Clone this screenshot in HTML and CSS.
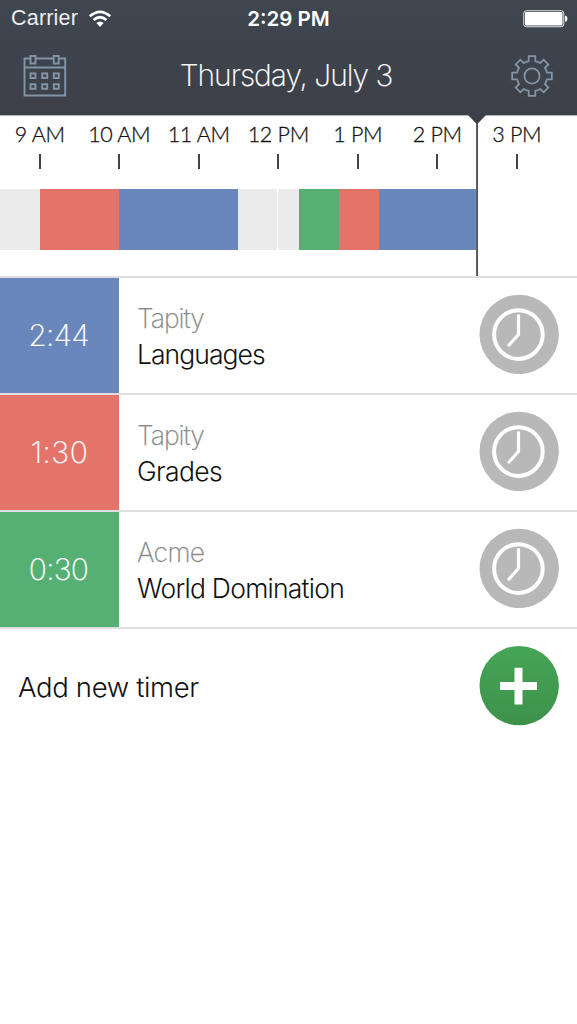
FILE: index.html
```html
<!DOCTYPE html>
<html lang="en">
<head>
<meta charset="utf-8">
<title>Timers</title>
<link rel="stylesheet" href="styles.css">
</head>
<body>
<svg width="0" height="0" class="defs">
  <symbol id="clock" viewBox="0 0 80 80">
    <circle cx="40.2" cy="40.4" r="39.7" fill="#b8b8b8"/>
    <circle cx="39.4" cy="40.6" r="24.3" fill="none" stroke="#fff" stroke-width="4"/>
    <path d="M39.5 21.5V40.5L30 51" fill="none" stroke="#fff" stroke-width="3.2" stroke-linecap="round" stroke-linejoin="round"/>
  </symbol>
</svg>
<header class="header">
  <div class="status">
    <div class="carrier"><span class="carrier-name">Carrier</span>
      <svg class="wifi" width="24" height="18" viewBox="0 0 24 18">
        <path d="M1.8 6.2Q12 -2.4 22.2 6.2" fill="none" stroke="#fff" stroke-width="2.8"/>
        <path d="M5.6 10Q12 4.6 18.4 10" fill="none" stroke="#fff" stroke-width="2.8"/>
        <path d="M8.4 13Q12 9.8 15.6 13L12 17Z" fill="#fff"/>
      </svg>
    </div>
    <div class="time">2:29 PM</div>
    <svg class="battery" width="45" height="18" viewBox="0 0 45 18">
      <rect x=".75" y=".75" width="40" height="16" rx="2.5" fill="none" stroke="#e5e6e8" stroke-width="1"/>
      <rect x="2" y="2" width="37.5" height="13.5" rx="1" fill="#fff"/>
      <path d="M42 5.5Q44.5 6 44.5 8.7T42 12Z" fill="#fff"/>
    </svg>
  </div>
  <div class="nav">
    <svg width="44" height="42" viewBox="0 0 44 42" fill="none" stroke="#8494a6" stroke-width="1.9">
      <path d="M7.5 3.5H1.5V40.5H42.2V3.5H35.5M12.5 3.5H30.5M1.5 12.5H42.2"/>
      <path d="M7.5 1H12.5V8.5H7.5ZM30.7 1H35.7V8.5H30.7Z"/>
      <path d="M7.5 18.5h5v4.5h-5zM19.2 18.5h5v4.5h-5zM30.8 18.5h5v4.5h-5zM7.5 29.3h5v4.5h-5zM19.2 29.3h5v4.5h-5zM30.8 29.3h5v4.5h-5z"/>
    </svg>
    <h1 class="title">Thursday, July 3</h1>
    <svg width="42" height="42" viewBox="0 0 42 42" fill="none" stroke="#8494a6" stroke-width="1.8">
      <path d="M17.7 1.2H24.3V6.1Q26.8 6.6 29.2 8.1L32.6 4.7L37.3 9.4L33.9 12.8Q35.4 15.2 35.9 17.7H40.8V24.3H35.9Q35.4 26.8 33.9 29.2L37.3 32.6L32.6 37.3L29.2 33.9Q26.8 35.4 24.3 35.9V40.8H17.7V35.9Q15.2 35.4 12.8 33.9L9.4 37.3L4.7 32.6L8.1 29.2Q6.6 26.8 6.1 24.3H1.2V17.7H6.1Q6.6 15.2 8.1 12.8L4.7 9.4L9.4 4.7L12.8 8.1Q15.2 6.6 17.7 6.1Z"/>
      <circle cx="21" cy="21" r="7.6"/>
    </svg>
  </div>
</header>

<section class="timeline">
  <div class="hours">
    <div class="hour">9 AM</div><div class="hour">10 AM</div><div class="hour">11 AM</div><div class="hour">12 PM</div><div class="hour">1 PM</div><div class="hour">2 PM</div><div class="hour">3 PM</div>
  </div>
  <div class="bar">
    <i class="idle w-a"></i><i class="red w-b"></i><i class="blue w-c"></i><i class="idle w-d"></i><i class="idle w-e"></i><i class="green w-f"></i><i class="red w-f"></i><i class="blue w-g"></i>
  </div>
  <svg class="now" width="18" height="161" viewBox="0 0 18 161"><path d="M0 0H18L9.900 8.500V161H8.200V8.500Z" fill="#3e4049"/></svg>
</section>

<main>
  <div class="row">
    <div class="total blue t244">2:44</div>
    <div class="info"><div class="client tapity">Tapity</div><div class="task languages">Languages</div></div>
    <svg class="button" width="80" height="81"><use href="#clock" width="80" height="80"/></svg>
  </div>
  <div class="row">
    <div class="total red t130">1:30</div>
    <div class="info"><div class="client tapity">Tapity</div><div class="task grades">Grades</div></div>
    <svg class="button" width="80" height="81"><use href="#clock" width="80" height="80"/></svg>
  </div>
  <div class="row">
    <div class="total green t030">0:30</div>
    <div class="info"><div class="client acme">Acme</div><div class="task world">World Domination</div></div>
    <svg class="button" width="80" height="81"><use href="#clock" width="80" height="80"/></svg>
  </div>
  <div class="row add">
    <div class="add-label">Add new timer</div>
    <svg class="button" width="80" height="81" viewBox="0 0 80 81">
      <defs><linearGradient id="g" x2="0" y2="1"><stop stop-color="#45a556"/><stop offset="1" stop-color="#3d924b"/></linearGradient></defs>
      <circle cx="40.2" cy="40.6" r="39.7" fill="url(#g)"/>
      <path d="M35.500 22.700H43.500V37H58V45H43.500V59.500H35.500V45H21V37H35.500Z" fill="#fff"/>
    </svg>
  </div>
</main>
</body>
</html>
```
FILE: styles.css
```css
* { box-sizing: border-box; }
body { margin: 0; background: #fff; color: #111; font-family: Inter, "Liberation Sans", sans-serif; font-weight: 300; white-space: nowrap; }
.defs { display: block; }
.header { height: 115px; background: linear-gradient(#3e464f, #3d444d 45%, #3e4049 90%); color: #fff; }
.status { height: 36px; display: grid; grid-template-columns: 1fr auto 1fr; align-items: center; padding: 0 9px 0 11px; }
.carrier { display: flex; align-items: center; gap: 10px; font-family: "Liberation Sans", sans-serif; font-size: 21.5px; font-weight: 400; color: #eceef0; padding-top: 1px; }
.carrier-name { letter-spacing: .2px; }
.time { font-size: 20.5px; font-weight: 600; letter-spacing: 0; margin-left: -2px; }
.battery { justify-self: end; margin-top: 1px; }
.nav { height: 79px; display: flex; align-items: center; justify-content: space-between; padding: 1px 24px 0 23px; }
.title { margin: 0 0 2px -6px; font-size: 30px; font-weight: 250; letter-spacing: -1px; -webkit-text-stroke: .2px; }
.timeline { position: relative; height: 161px; border-top: 1px solid #b5b6ba; }
.hours { display: grid; grid-template-columns: repeat(7, 79.5px); height: 73px; }
.hour { display: flex; flex-direction: column; align-items: center; font: 300 21.5px/26px Lato, sans-serif; letter-spacing: -.3px; -webkit-text-stroke: .3px; padding-top: 5px; color: #111; }
.hour::after { content: ""; width: 2px; height: 15px; background: #444; margin-top: 7px; }
.bar { display: flex; height: 61px; }
.blue { background: #6a87bc; }
.red { background: #e4746a; }
.green { background: #57b073; }
.idle { background: #ececec; }
.w-a { width: 39.5px; }
.w-b { width: 79.5px; }
.w-c { width: 119px; }
.w-d { width: 39px; margin-right: 1px; }
.w-e { width: 21px; }
.w-f { width: 40px; }
.w-g { width: 97px; }
.now { position: absolute; left: 468px; top: -1px; z-index: 1; }
.row { height: 117px; border-top: 2px solid #dedede; display: flex; align-items: center; padding-right: 18px; }
.button { margin-bottom: 2px; }
.total { width: 119px; height: 115px; display: flex; align-items: center; justify-content: center; font-size: 30px; font-weight: 250; -webkit-text-stroke: .2px; color: #fff; padding: 0 2px 2px 0; }
.t244, .t030 { letter-spacing: -.7px; }
.t130 { letter-spacing: .5px; padding-right: 0; }
.info { flex: 1; padding-left: 18px; line-height: 36px; font-size: 26.5px; }
.client { color: #8a8a8a; font-weight: 250; -webkit-text-stroke: .25px; }
.tapity { letter-spacing: -1px; }
.acme { letter-spacing: -.6px; }
.languages { letter-spacing: -.95px; }
.grades { letter-spacing: -.6px; }
.world { letter-spacing: -.75px; }
.add-label { flex: 1; padding-left: 18px; font-size: 27.5px; letter-spacing: -.35px; }
```
